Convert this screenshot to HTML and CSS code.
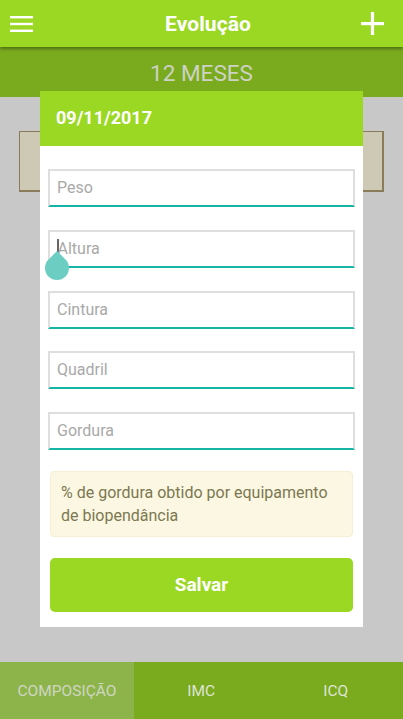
FILE: index.html
```html
<!DOCTYPE html>
<html>
<head>
<meta charset="utf-8">
<link rel="stylesheet" href="styles.css">
</head>
<body>
<div class="app">
  <header class="topbar">
    <svg class="icon menu" width="24" height="18" viewBox="0 0 24 18"><rect x="0" y="1" width="23" height="2.4" fill="#fff"/><rect x="0" y="7.8" width="23" height="2.4" fill="#fff"/><rect x="0" y="14.6" width="23" height="2.4" fill="#fff"/></svg>
    <h1 class="title">Evolução</h1>
    <svg class="icon plus" width="23" height="23" viewBox="0 0 23 23"><rect x="0" y="10" width="23" height="3.2" fill="#fff"/><rect x="9.9" y="0" width="3.2" height="23" fill="#fff"/></svg>
  </header>
  <div class="period">12 MESES</div>
  <main class="content">
    <div class="card"></div>
  </main>
  <nav class="tabs">
    <div class="tab active">COMPOSIÇÃO</div>
    <div class="tab">IMC</div>
    <div class="tab">ICQ</div>
  </nav>

  <div class="dialog">
    <div class="dialog-head">09/11/2017</div>
    <div class="dialog-body">
      <div class="field"><span class="ph">Peso</span></div>
      <div class="field focused"><span class="caret"></span><span class="ph">Altura</span><span class="handle"></span></div>
      <div class="field"><span class="ph">Cintura</span></div>
      <div class="field"><span class="ph">Quadril</span></div>
      <div class="field"><span class="ph">Gordura</span></div>
      <div class="note">% de gordura obtido por equipamento de biopendância</div>
      <button class="save">Salvar</button>
    </div>
  </div>
</div>
</body>
</html>
```

FILE: styles.css
```css
* { box-sizing: border-box; }
html, body { margin: 0; padding: 0; }
body { font-family: Roboto, "Noto Sans", sans-serif; width: 403px; height: 719px; overflow: hidden; }
.app { position: relative; width: 403px; height: 719px; display: flex; flex-direction: column; background: #c8c8c8; }

.topbar {
  height: 47px; background: #9bd823; display: grid; grid-template-columns: 1fr auto 1fr; align-items: center;
  padding: 0 19px 0 10px; position: relative; z-index: 2;
  box-shadow: 0 2px 3px rgba(0,0,0,0.35);
}
.title { margin: 0 0 0 22px; color: #fff; font-size: 21px; font-weight: 700; letter-spacing: 0.1px; }
.menu { margin-top: 1px; justify-self: start; }
.plus { justify-self: end; }

.period {
  height: 50px; background: #7aab1e; color: #cdd2c4; font-size: 22.5px; display: flex; align-items: center; justify-content: center;
  padding-top: 1px;
}

.content { flex: 1; padding: 34px 19px 0 19px; }
.card { height: 61px; background: #cdc9b4; border: 1px solid #8a7b5b; border-width: 1px 2px 2px 1px; }

.tabs { height: 57px; display: flex; background: #7aab1e; }
.tab { flex: 1; display: flex; align-items: center; justify-content: center; color: #dfe4d5; font-size: 15.5px; }
.tab.active { background: #8db44a; color: #cfd6c2; flex: 0 0 134px; }

.dialog {
  position: absolute; left: 40px; top: 91px; width: 323px; height: 536px; background: #fff; z-index: 3;
}
.dialog-head { height: 55px; background: #9bd823; color: #fff; font-weight: 700; font-size: 18px; display: flex; align-items: center; padding-left: 16px; padding-bottom: 3px; }
.dialog-body { padding: 23px 8px 0 8px; display: flex; flex-direction: column; }
.field {
  position: relative; height: 38px; border: 2px solid #dedede; border-bottom: 2.5px solid #14b5a4; margin-bottom: 22.75px;
  display: flex; align-items: center; padding-left: 7px; padding-bottom: 1px; flex-shrink: 0;
}
.ph { color: #a9a9a9; font-size: 16px; }
.caret { width: 1.5px; height: 19px; background: #666; margin-right: -1px; }
.handle {
  position: absolute; left: -5px; top: 24px; width: 24px; height: 24px; background: #6ccdc3;
  border-radius: 0 50% 50% 50%; transform: rotate(45deg);
}
.note {
  margin: -2px 2px 0 2px; height: 66px; background: #fcf7e2; border: 1px solid #f5efd5; border-radius: 4px;
  color: #7b7851; font-size: 16px; line-height: 23px; padding: 9px 10px 0 10px; flex-shrink: 0;
}
.save {
  margin: 21px 2px 0 2px; height: 54px; background: #9bd823; border: none; border-radius: 5px;
  color: #fff; font-family: Roboto, sans-serif; font-weight: 700; font-size: 19px;
}
```
